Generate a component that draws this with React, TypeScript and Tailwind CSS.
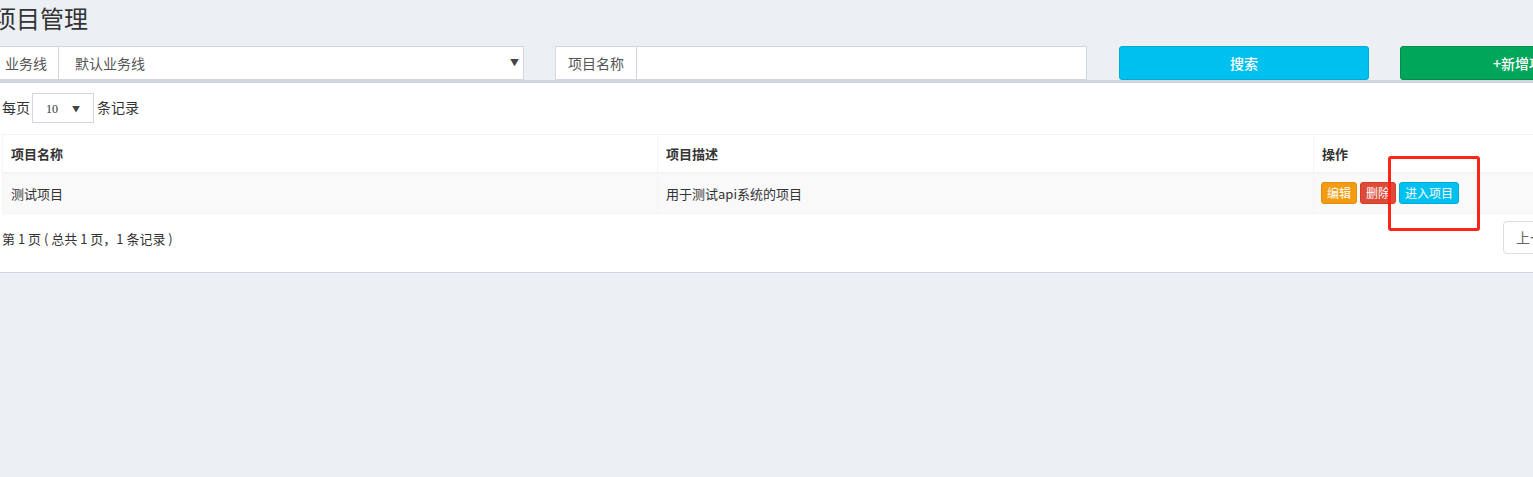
const font = { fontFamily: '"Noto Sans CJK SC", "Liberation Sans", sans-serif' }

export default function App() {
  return (
    <div className="relative w-[1533px] h-[477px] overflow-hidden bg-[#ecf0f5] text-[#333]" style={font}>
      {/* page title */}
      <h1 className="ml-[-8px] pt-[1px] h-[46px] text-[24px] leading-[34px] text-[#333] whitespace-nowrap">项目管理</h1>

      {/* search bar */}
      <div className="flex w-[1700px] h-[34px] text-[14px]">
        <div className="flex w-[524px] border border-[#d2d6de] border-l-0 bg-white">
          <span className="w-[59px] border-r border-[#d2d6de] flex items-center pl-[5px] text-[#555]">业务线</span>
          <div className="flex-1 flex items-center justify-between pl-[16px] pr-[4px] text-[#555]">
            <span>默认业务线</span>
            <span className="text-[9px] text-[#444]">▼</span>
          </div>
        </div>
        <div className="flex ml-[31px] w-[532px] border border-[#d2d6de] bg-white">
          <span className="w-[81px] border-r border-[#d2d6de] flex items-center justify-center text-[#555]">项目名称</span>
          <div className="flex-1" />
        </div>
        <button className="ml-[32px] w-[250px] rounded-[3px] border border-[#00acd6] bg-[#00c0ef] text-white text-[14px] font-medium">搜索</button>
        <button className="ml-[31px] w-[250px] rounded-[3px] border border-[#008d4c] bg-[#00a65a] text-white text-[14px] font-medium whitespace-nowrap">+新增项目</button>
      </div>

      {/* box */}
      <div className="w-[1700px] border-t-[3px] border-[#d2d6de] bg-white border-b border-b-[#d2d6de] h-[193px]">
        <div className="flex items-center pt-[10px] text-[14px] h-[39px]">
          <span className="ml-[2px]">每页</span>
          <div className="ml-[2px] w-[62px] h-[30px] border border-[#d2d6de] flex items-center justify-between px-[13px] pt-[3px]">
            <span className="text-[12px]" style={{ fontFamily: '"Liberation Serif", serif' }}>10</span>
            <span className="text-[8px] text-[#444] ml-[2px]">▼</span>
          </div>
          <span className="ml-[3px]">条记录</span>
        </div>

        <table className="ml-[2px] mt-[12px] border border-[#f4f4f4] border-collapse text-[13px]">
          <thead>
            <tr className="h-[38px]">
              <th className="w-[655px] border border-[#f4f4f4] border-b-2 text-left font-bold px-[8px]">项目名称</th>
              <th className="w-[656px] border border-[#f4f4f4] border-b-2 text-left font-bold px-[8px]">项目描述</th>
              <th className="w-[380px] border border-[#f4f4f4] border-b-2 text-left font-bold px-[8px]">操作</th>
            </tr>
          </thead>
          <tbody>
            <tr className="h-[41px] bg-[#f9f9f9]">
              <td className="border border-[#f4f4f4] px-[8px]">测试项目</td>
              <td className="border border-[#f4f4f4] px-[8px]">用于测试api系统的项目</td>
              <td className="border border-[#f4f4f4] px-[7px]">
                <div className="flex gap-[4px] text-[12px] text-white">
                  <span className="h-[22px] px-[5px] leading-[20px] rounded-[3px] border border-[#e08e0b] bg-[#f39c12]">编辑</span>
                  <span className="h-[22px] px-[5px] leading-[20px] rounded-[3px] border border-[#d73925] bg-[#dd4b39] -ml-[1px]">删除</span>
                  <span className="h-[22px] px-[5px] leading-[20px] rounded-[3px] border border-[#00acd6] bg-[#00c0ef] -ml-[1px]">进入项目</span>
                </div>
              </td>
            </tr>
          </tbody>
        </table>

        <div className="flex items-start w-[1583px] mt-[7px]">
          <span className="ml-[2px] mt-[8px] text-[13px] whitespace-nowrap">第 1 页 ( 总共 1 页，1 条记录 )</span>
          <span className="ml-auto w-[80px] h-[33px] rounded-[4px] border border-[#ddd] px-[12px] flex items-center text-[14px] text-[#666] whitespace-nowrap">上一页</span>
        </div>
      </div>

      {/* red annotation */}
      <div className="absolute left-[1388px] top-[156px] w-[92px] h-[75px] border-[3px] border-[#ff2318] rounded-[3px]" />
    </div>
  )
}
